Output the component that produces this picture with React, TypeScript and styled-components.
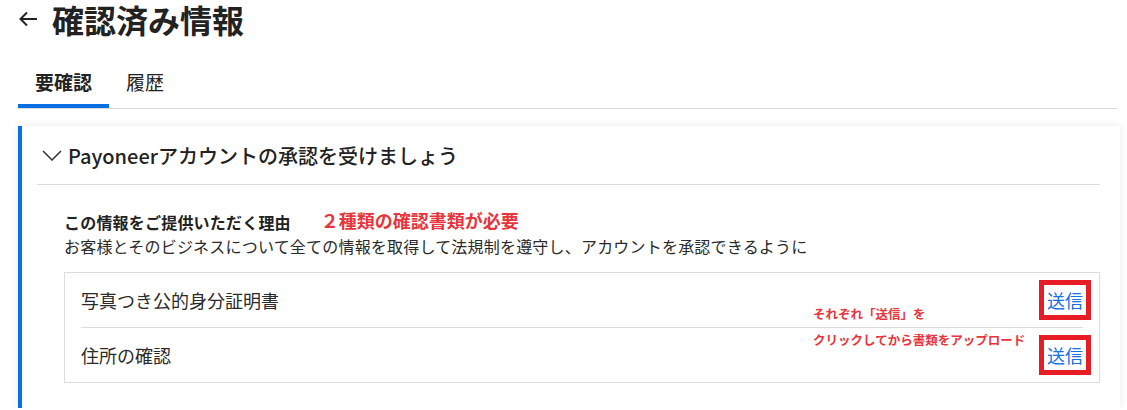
import * as React from 'react'
import styled, { createGlobalStyle } from 'styled-components'

const GlobalStyle = createGlobalStyle`
  body {
    margin: 0;
    background: #fff;
    font-family: "Noto Sans CJK JP", "Noto Sans", sans-serif;
    color: #222;
  }
`

const colors = {
  blue: '#0a6fe0',
  link: '#1670e6',
  text: '#222',
  line: '#dcdcdc',
  red: '#e8343c',
  mark: '#e81c24',
}

const Page = styled.div`
  padding: 0 7px 0 18px;
`

const Header = styled.div`
  display: flex;
  align-items: center;
  height: 38px;
`

const BackButton = styled.button`
  display: flex;
  align-items: center;
  padding: 0;
  margin-right: 14px;
  border: 0;
  background: none;
  color: ${colors.text};
`

const Title = styled.h1`
  margin: 0;
  font-size: 32px;
  line-height: 38px;
  font-weight: 700;
  color: ${colors.text};
`

const TabBar = styled.div`
  display: flex;
  margin-top: 22px;
  border-bottom: 1px solid ${colors.line};
  margin-right: 2px;
`

const Tab = styled.div<{ $active?: boolean }>`
  height: 48px;
  box-sizing: border-box;
  padding: 0 17px;
  line-height: 44px;
  font-size: 19px;
  font-weight: ${p => (p.$active ? 700 : 400)};
  color: ${colors.text};
  border-bottom: 4px solid ${p => (p.$active ? colors.blue : 'transparent')};
`

const Card = styled.div`
  margin-top: 17px;
  border-left: 4px solid ${colors.blue};
  background: #fff;
  box-shadow: 0 0 8px rgba(0, 0, 0, 0.09);
  padding: 0 20px 25px 15px;
`

const CardHeader = styled.div`
  display: flex;
  align-items: center;
  gap: 6px;
  height: 58px;
  padding-left: 5px;
  border-bottom: 1px solid ${colors.line};
  font-size: 20px;
  font-weight: 500;
  color: ${colors.text};
`

const Section = styled.div`
  padding: 22px 0 0 27px;
`

const ReasonRow = styled.div`
  display: flex;
  align-items: center;
  gap: 30px;
  height: 26px;
`

const ReasonTitle = styled.span`
  font-size: 16px;
  font-weight: 700;
  padding-top: 4px;
  letter-spacing: 0.2px;
`

const Note = styled.span<{ $size: number }>`
  color: ${colors.red};
  font-weight: 700;
  font-size: ${p => p.$size}px;
`

const Description = styled.p`
  margin: 0;
  font-size: 16px;
  line-height: 26px;
  letter-spacing: 0.2px;
  color: #2a2a2a;
`

const DocBox = styled.div`
  position: relative;
  margin-top: 13px;
  border: 1px solid ${colors.line};
  padding: 0 16px;
`

const DocRow = styled.div<{ $last?: boolean }>`
  display: flex;
  align-items: center;
  justify-content: space-between;
  height: 54px;
  border-bottom: ${p => (p.$last ? 'none' : `1px solid ${colors.line}`)};
  font-size: 18px;
  color: #2a2a2a;
`

const SendLink = styled.a`
  font-size: 18px;
  line-height: 24px;
  color: ${colors.link};
  text-decoration: none;
  outline: 5px solid ${colors.mark};
  outline-offset: 3px;
`

const Annotation = styled.div`
  position: absolute;
  left: 748px;
  top: 28px;
  display: flex;
  flex-direction: column;
  line-height: 26px;
`

const ArrowLeft = () => (
  <svg width="20" height="16" viewBox="0 0 20 16" fill="none" stroke="currentColor" strokeWidth="2">
    <path d="M19 8H2.5M9 1.5L2.5 8L9 14.5" />
  </svg>
)

const ChevronDown = () => (
  <svg width="20" height="11" viewBox="0 0 20 11" fill="none" stroke="#333" strokeWidth="1.5">
    <path d="M1 1L10 10L19 1" />
  </svg>
)

const docs = ['写真つき公的身分証明書', '住所の確認']

export default function App() {
  return (
    <Page>
      <GlobalStyle />
      <Header>
        <BackButton>
          <ArrowLeft />
        </BackButton>
        <Title>確認済み情報</Title>
      </Header>
      <TabBar>
        <Tab $active>要確認</Tab>
        <Tab>履歴</Tab>
      </TabBar>
      <Card>
        <CardHeader>
          <ChevronDown />
          <span>Payoneerアカウントの承認を受けましょう</span>
        </CardHeader>
        <Section>
          <ReasonRow>
            <ReasonTitle>この情報をご提供いただく理由</ReasonTitle>
            <Note $size={18}>２種類の確認書類が必要</Note>
          </ReasonRow>
          <Description>
            お客様とそのビジネスについて全ての情報を取得して法規制を遵守し、アカウントを承認できるように
          </Description>
          <DocBox>
            {docs.map((d, i) => (
              <DocRow key={d} $last={i === docs.length - 1}>
                <span>{d}</span>
                <SendLink href="#">送信</SendLink>
              </DocRow>
            ))}
            <Annotation>
              <Note $size={12.5}>それぞれ「送信」を</Note>
              <Note $size={12.5}>クリックしてから書類をアップロード</Note>
            </Annotation>
          </DocBox>
        </Section>
      </Card>
    </Page>
  )
}
